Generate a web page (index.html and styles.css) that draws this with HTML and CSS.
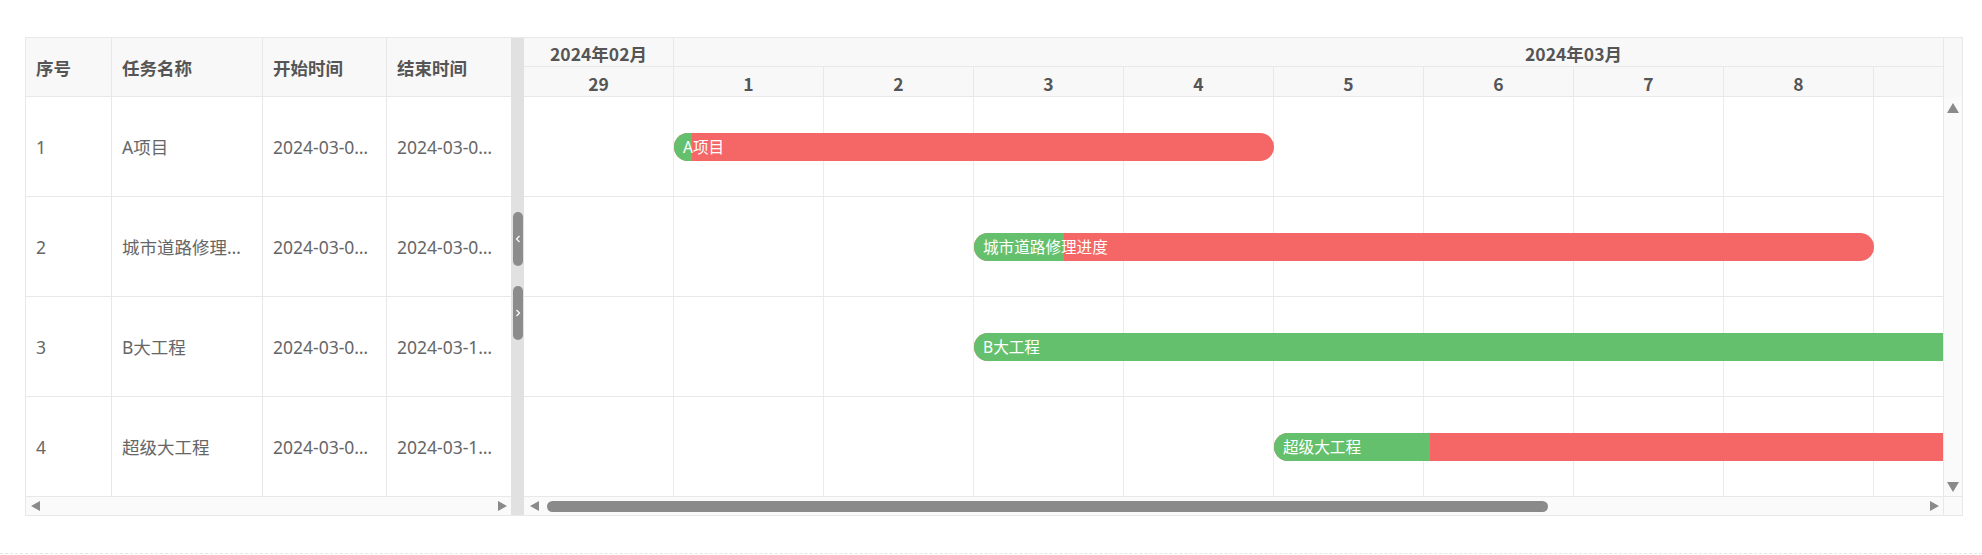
FILE: index.html
```html
<!DOCTYPE html>
<html lang="zh-CN">
<head>
  <meta charset="UTF-8" />
  <meta name="viewport" content="width=device-width, initial-scale=1.0" />
  <title>项目甘特图</title>
  <link rel="stylesheet" href="styles.css">
</head>
<body>
  <div class="wrap">
    <div class="gantt">

      <!-- left: task table -->
      <div class="grid-pane">
        <div class="grid-head">
          <div class="cell">序号</div>
          <div class="cell">任务名称</div>
          <div class="cell">开始时间</div>
          <div class="cell">结束时间</div>
        </div>
        <div class="grid-row">
          <div class="cell">1</div>
          <div class="cell"><span class="clip">A项目</span></div>
          <div class="cell date"><span class="clip">2024-03-01 00:00:00</span></div>
          <div class="cell date"><span class="clip">2024-03-04 23:59:59</span></div>
        </div>
        <div class="grid-row">
          <div class="cell">2</div>
          <div class="cell"><span class="clip">城市道路修理进度</span></div>
          <div class="cell date"><span class="clip">2024-03-03 00:00:00</span></div>
          <div class="cell date"><span class="clip">2024-03-08 23:59:59</span></div>
        </div>
        <div class="grid-row">
          <div class="cell">3</div>
          <div class="cell"><span class="clip">B大工程</span></div>
          <div class="cell date"><span class="clip">2024-03-03 00:00:00</span></div>
          <div class="cell date"><span class="clip">2024-03-12 23:59:59</span></div>
        </div>
        <div class="grid-row">
          <div class="cell">4</div>
          <div class="cell"><span class="clip">超级大工程</span></div>
          <div class="cell date"><span class="clip">2024-03-05 00:00:00</span></div>
          <div class="cell date"><span class="clip">2024-03-12 23:59:59</span></div>
        </div>
        <div class="hscroll">
          <span class="arrow arrow-left"></span>
          <span class="arrow arrow-right push"></span>
        </div>
      </div>

      <!-- drag bar between table and chart -->
      <div class="splitter">
        <button class="split-btn" title="收起">
          <svg width="6" height="8" viewBox="0 0 6 8"><polyline points="4.5,1 1.5,4 4.5,7" /></svg>
        </button>
        <button class="split-btn" title="展开">
          <svg width="6" height="8" viewBox="0 0 6 8"><polyline points="1.5,1 4.5,4 1.5,7" /></svg>
        </button>
      </div>

      <!-- right: timeline -->
      <div class="chart-pane">
        <div class="chart-view">
          <div class="chart-inner">
            <div class="month-row">
              <div class="month" style="width:150px">2024年02月</div>
              <div class="month" style="width:1800px">2024年03月</div>
            </div>
            <div class="day-row">
              <div class="day">29</div>
              <div class="day">1</div>
              <div class="day">2</div>
              <div class="day">3</div>
              <div class="day">4</div>
              <div class="day">5</div>
              <div class="day">6</div>
              <div class="day">7</div>
              <div class="day">8</div>
              <div class="day">9</div>
              <div class="day">10</div>
              <div class="day">11</div>
              <div class="day">12</div>
            </div>

            <!-- 150px per day, chart starts on 02-29 -->
            <div class="chart-row">
              <div class="bar" style="left:150px;width:600px">
                <div class="bar-done" style="width:3%"></div>
                <span class="bar-label">A项目</span>
              </div>
            </div>
            <div class="chart-row">
              <div class="bar" style="left:450px;width:900px">
                <div class="bar-done" style="width:10%"></div>
                <span class="bar-label">城市道路修理进度</span>
              </div>
            </div>
            <div class="chart-row">
              <div class="bar" style="left:450px;width:1500px">
                <div class="bar-done" style="width:100%"></div>
                <span class="bar-label">B大工程</span>
              </div>
            </div>
            <div class="chart-row">
              <div class="bar" style="left:750px;width:1200px">
                <div class="bar-done" style="width:13%"></div>
                <span class="bar-label">超级大工程</span>
              </div>
            </div>
          </div>
        </div>
        <div class="hscroll">
          <span class="arrow arrow-left"></span>
          <span class="thumb"></span>
          <span class="arrow arrow-right push"></span>
        </div>
      </div>

      <div class="vscroll">
        <div class="vscroll-head"></div>
        <div class="vscroll-track">
          <span class="arrow arrow-up"></span>
          <span class="arrow arrow-down"></span>
        </div>
        <div class="vscroll-corner"></div>
      </div>

    </div>
  </div>
  <div class="divider"></div>
</body>
</html>
```

FILE: styles.css
```css
* {
  box-sizing: border-box;
}
body {
  margin: 0;
  font-family: "Noto Sans", "Noto Sans CJK SC", sans-serif;
  font-size: 17.5px;
  color: #666;
  background: #fff;
}
.wrap {
  padding: 37px 20px 0 25px;
}
.gantt {
  display: flex;
  width: 1938px;
  height: 479px;
  border: 1px solid #e8e8e8;
}

/* table side */
.grid-pane {
  width: 485px;
  display: flex;
  flex-direction: column;
}
.grid-head,
.grid-row {
  display: grid;
  grid-template-columns: 86px 151px 124px 124px;
  border-bottom: 1px solid #e8e8e8;
}
.grid-head {
  height: 59px;
  background: #f8f8f8;
  font-weight: bold;
  color: #555;
}
.grid-row {
  height: 100px;
}
.cell {
  display: flex;
  align-items: center;
  padding: 0 10px;
  border-right: 1px solid #e8e8e8;
  min-width: 0;
}
.cell:last-child {
  border-right: none;
}
.cell.date {
  padding-right: 15px;
}
.clip {
  white-space: nowrap;
  overflow: hidden;
  text-overflow: ellipsis;
}

/* scrollbars */
.hscroll {
  height: 18px;
  background: #fafafa;
  display: flex;
  align-items: center;
  padding: 0 4px 0 5px;
}
.arrow {
  display: block;
  width: 0;
  height: 0;
}
.arrow-left {
  border-top: 5.5px solid transparent;
  border-bottom: 5.5px solid transparent;
  border-right: 9px solid #8a8a8a;
}
.arrow-right {
  border-top: 5.5px solid transparent;
  border-bottom: 5.5px solid transparent;
  border-left: 9px solid #8a8a8a;
}
.arrow-up {
  border-left: 6.5px solid transparent;
  border-right: 6.5px solid transparent;
  border-bottom: 10px solid #8a8a8a;
}
.arrow-down {
  border-left: 6.5px solid transparent;
  border-right: 6.5px solid transparent;
  border-top: 10px solid #8a8a8a;
}
.push {
  margin-left: auto;
}
.thumb {
  display: block;
  width: 1001px;
  height: 11px;
  margin-left: 8px;
  border-radius: 6px;
  background: #8a8a8a;
}

.splitter {
  width: 13px;
  background: #e1e1e1;
  padding: 174px 0 0 2px;
  display: flex;
  flex-direction: column;
  gap: 20px;
}
.split-btn {
  width: 10px;
  height: 54px;
  padding: 0;
  border: none;
  border-radius: 5px;
  background: #8c8c8c;
  display: flex;
  align-items: center;
  justify-content: center;
  cursor: pointer;
}
.split-btn polyline {
  fill: none;
  stroke: #fff;
  stroke-width: 1.2;
}

/* timeline side */
.chart-pane {
  flex: 1;
  min-width: 0;
  display: flex;
  flex-direction: column;
}
.chart-pane .hscroll {
  padding: 0 4px 0 6px;
}
.chart-view {
  flex: 1;
  overflow: hidden;
}
.chart-inner {
  width: 1950px;
}
.month-row,
.day-row {
  display: flex;
  background: #f8f8f8;
  border-bottom: 1px solid #e8e8e8;
  font-family: "Noto Sans CJK SC", sans-serif;
  font-weight: bold;
  color: #555;
}
.month-row {
  height: 29px;
}
.day-row {
  height: 30px;
}
.month,
.day {
  display: flex;
  align-items: center;
  justify-content: center;
  padding-top: 3px;
  border-right: 1px solid #e8e8e8;
}
.day {
  width: 150px;
}
.chart-row {
  position: relative;
  height: 100px;
  border-bottom: 1px solid #e8e8e8;
  background-image: linear-gradient(to right, transparent 149px, #ebebeb 149px);
  background-size: 150px 100%;
}
.bar {
  position: absolute;
  top: 36px;
  height: 28px;
  border-radius: 14px;
  background: #f56767;
  overflow: hidden;
}
.bar-done {
  position: absolute;
  left: 0;
  top: 0;
  bottom: 0;
  background: #65c06d;
}
.bar-label {
  position: relative;
  display: block;
  padding-left: 9px;
  line-height: 28px;
  font-size: 15.6px;
  color: #fff;
  white-space: nowrap;
}

.vscroll {
  width: 19px;
  border-left: 1px solid #e8e8e8;
  display: flex;
  flex-direction: column;
}
.vscroll-head {
  height: 59px;
  background: #f8f8f8;
}
.vscroll-track {
  height: 400px;
  background: #fafafa;
  border-bottom: 1px solid #e8e8e8;
  display: flex;
  flex-direction: column;
  align-items: center;
  justify-content: space-between;
  padding: 6px 0 4px;
}
.vscroll-corner {
  flex: 1;
  background: #fafafa;
}

.divider {
  margin-top: 37px;
  border-top: 1px dashed #e6e6e6;
}
```
